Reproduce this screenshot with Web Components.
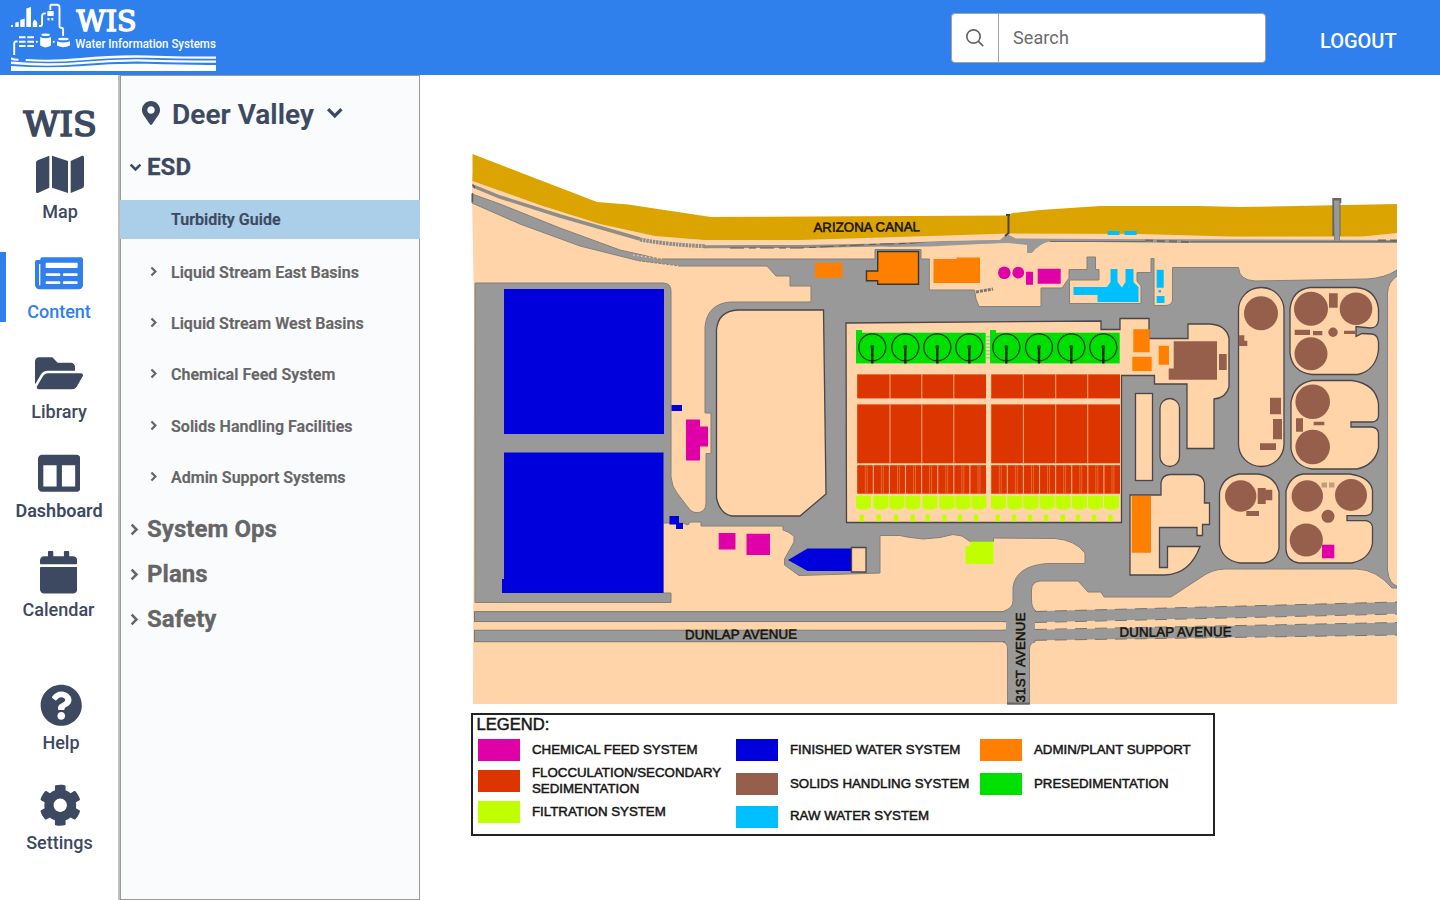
<!DOCTYPE html>
<html lang="en">
<head>
<meta charset="utf-8">
<title>WIS - Water Information Systems</title>
<style>
html,body{margin:0;height:100%;background:#fff;font-family:Roboto,"Liberation Sans",sans-serif;overflow:hidden}
</style>
</head>
<body>
<wis-app></wis-app>
<script>
const define = (name, html, setup) => {
  const tpl = document.createElement('template');
  tpl.innerHTML = html;
  customElements.define(name, class extends HTMLElement {
    connectedCallback() {
      if (this.shadowRoot) return;
      this.attachShadow({mode: 'open'}).append(tpl.content.cloneNode(true));
      if (setup) setup(this, this.shadowRoot);
    }
  });
};

const ICONS = {
  map: [576, 48, '<path d="M0 117.66v346.32c0 11.32 11.43 19.06 21.94 14.86L160 416V32L20.12 87.95A32.006 32.006 0 0 0 0 117.66zM192 416l192 64V96L192 32v384zM554.06 33.16L416 96v384l139.88-55.95A31.996 31.996 0 0 0 576 394.34V48.02c0-11.32-11.43-19.06-21.94-14.86z"/>'],
  news: [576, 48, '<path d="M552 64H88c-13.255 0-24 10.745-24 24v8H24c-13.255 0-24 10.745-24 24v272c0 30.928 25.072 56 56 56h472c26.51 0 48-21.49 48-48V88c0-13.255-10.745-24-24-24zM56 400a8 8 0 0 1-8-8V144h16v248a8 8 0 0 1-8 8zm236-16H140c-6.627 0-12-5.373-12-12v-8c0-6.627 5.373-12 12-12h152c6.627 0 12 5.373 12 12v8c0 6.627-5.373 12-12 12zm208 0H348c-6.627 0-12-5.373-12-12v-8c0-6.627 5.373-12 12-12h152c6.627 0 12 5.373 12 12v8c0 6.627-5.373 12-12 12zm-208-96H140c-6.627 0-12-5.373-12-12v-8c0-6.627 5.373-12 12-12h152c6.627 0 12 5.373 12 12v8c0 6.627-5.373 12-12 12zm208 0H348c-6.627 0-12-5.373-12-12v-8c0-6.627 5.373-12 12-12h152c6.627 0 12 5.373 12 12v8c0 6.627-5.373 12-12 12zm0-96H140c-6.627 0-12-5.373-12-12v-40c0-6.627 5.373-12 12-12h360c6.627 0 12 5.373 12 12v40c0 6.627-5.373 12-12 12z"/>'],
  folder: [576, 48, '<path d="M572.694 292.093L500.27 416.248A63.997 63.997 0 0 1 444.989 448H45.025c-18.523 0-30.064-20.093-20.731-36.093l72.424-124.155A64 64 0 0 1 152 256h399.964c18.523 0 30.064 20.093 20.73 36.093zM152 224h328v-48c0-26.51-21.49-48-48-48H272l-64-64H48C21.49 64 0 85.49 0 112v278.046l69.077-118.418C86.214 242.25 117.989 224 152 224z"/>'],
  columns: [512, 42.5, '<path d="M464 32H48C21.49 32 0 53.49 0 80v352c0 26.51 21.49 48 48 48h416c26.51 0 48-21.49 48-48V80c0-26.51-21.49-48-48-48zM224 416H64V160h160v256zm224 0H288V160h160v256z"/>'],
  calendar: [448, 37.2, '<path d="M12 192h424c6.6 0 12 5.4 12 12v260c0 26.5-21.5 48-48 48H48c-26.5 0-48-21.5-48-48V204c0-6.6 5.4-12 12-12zm436-44v-36c0-26.5-21.5-48-48-48h-48V12c0-6.6-5.4-12-12-12h-40c-6.6 0-12 5.4-12 12v52H160V12c0-6.6-5.4-12-12-12h-40c-6.6 0-12 5.4-12 12v52H48C21.5 64 0 85.5 0 112v36c0 6.6 5.4 12 12 12h424c6.6 0 12-5.4 12-12z"/>'],
  help: [512, 42.5, '<path d="M504 256c0 136.997-111.043 248-248 248S8 392.997 8 256C8 119.083 119.043 8 256 8s248 111.083 248 248zM262.655 90c-54.497 0-89.255 22.957-116.549 63.758-3.536 5.286-2.353 12.415 2.715 16.258l34.699 26.31c5.205 3.947 12.621 3.008 16.665-2.122 17.864-22.658 30.113-35.797 57.303-35.797 20.429 0 45.698 13.148 45.698 32.958 0 14.976-12.363 22.667-32.534 33.976C247.128 238.528 216 254.941 216 296v4c0 6.627 5.373 12 12 12h56c6.627 0 12-5.373 12-12v-1.333c0-28.462 83.186-29.647 83.186-106.667 0-58.002-60.165-102-116.531-102zM256 338c-25.365 0-46 20.635-46 46 0 25.364 20.635 46 46 46s46-20.636 46-46c0-25.365-20.635-46-46-46z"/>'],
  cog: [512, 42.5, '<path d="M487.4 315.7l-42.6-24.6c4.3-23.2 4.3-47 0-70.2l42.6-24.6c4.9-2.8 7.1-8.6 5.5-14-11.1-35.6-30-67.8-54.7-94.6-3.8-4.1-10-5.1-14.8-2.3L380.8 110c-17.9-15.4-38.5-27.3-60.8-35.1V25.8c0-5.6-3.9-10.5-9.4-11.7-36.7-8.2-74.3-7.8-109.2 0-5.5 1.2-9.4 6.1-9.4 11.7V75c-22.2 7.9-42.8 19.8-60.8 35.1L88.7 85.5c-4.9-2.8-11-1.9-14.8 2.3-24.7 26.7-43.6 58.9-54.7 94.6-1.7 5.4.6 11.2 5.5 14L67.3 221c-4.3 23.2-4.3 47 0 70.2l-42.6 24.6c-4.9 2.8-7.1 8.6-5.5 14 11.1 35.6 30 67.8 54.7 94.6 3.8 4.1 10 5.1 14.8 2.3l42.6-24.6c17.9 15.4 38.5 27.3 60.8 35.1v49.2c0 5.6 3.9 10.5 9.4 11.7 36.7 8.2 74.3 7.8 109.2 0 5.5-1.2 9.4-6.1 9.4-11.7v-49.2c22.2-7.9 42.8-19.8 60.8-35.1l42.6 24.6c4.9 2.8 11 1.9 14.8-2.3 24.7-26.7 43.6-58.9 54.7-94.6 1.5-5.5-.7-11.3-5.6-14.1zM256 336c-44.1 0-80-35.9-80-80s35.9-80 80-80 80 35.9 80 80-35.9 80-80 80z"/>'],
  pin: [384, 18, '<path d="M172.268 501.67C26.97 291.031 0 269.413 0 192 0 85.961 85.961 0 192 0s192 85.961 192 192c0 77.413-26.97 99.031-172.268 309.67-9.535 13.774-29.93 13.773-39.464 0zM192 272c44.183 0 80-35.817 80-80s-35.817-80-80-80-80 35.817-80 80 35.817 80 80 80z"/>']
};

define('wis-icon', `<style>:host{display:block;flex:none}svg{display:block;fill:currentColor}</style>`, (el, root) => {
  const [w, px, d] = ICONS[el.getAttribute('name')];
  root.innerHTML += `<svg viewBox="0 0 ${w} 512" width="${px}" height="${px * 512 / w}">${d}</svg>`;
});

define('wis-chevron', `<style>:host{display:block;flex:none}svg{display:block;fill:none;stroke:currentColor;stroke-linecap:square}
</style>`, (el, root) => {
  const s = +el.getAttribute('size'), w = +el.getAttribute('weight'), down = el.hasAttribute('down');
  const long = s, half = s / 2, m = w;
  const W = (down ? long : half) + 2 * m, H = (down ? half : long) + 2 * m;
  const p = down ? `${m},${m} ${m + half},${m + half} ${m + long},${m}` : `${m},${m} ${m + half},${m + half} ${m},${m + long}`;
  root.innerHTML += `<svg width="${W}" height="${H}"><polyline points="${p}" stroke-width="${w}"/></svg>`;
});

define('wis-logo', `<style>:host{display:block;width:240px;height:75px}svg{display:block;fill:#fff}</style>
<svg width="240" height="75" viewBox="0 0 240 75">
<rect x="11" y="25" width="2" height="2"/><path d="M15.3 22.7l3.4-1V27h-3.4zM20.3 20l4.4-1.5V27h-4.4zM26.3 8.5L31 7v20h-4.7zM32.8 22l1.8-2.4 2.6 2.4v5h-4.4z"/>
<rect x="47.3" y="11" width="6.4" height="5" rx=".8"/><rect x="47.5" y="18" width="2" height="2.4"/><rect x="51.3" y="18" width="2" height="2.4"/>
<g fill="none" stroke="#fff" stroke-width="1.9"><path d="M39 26h1.5q1.6 0 1.6-2V16q0-2.6 2.6-2.6h1M50.3 10V6q0-1.2 1.2-1.2h5.3q2.7 0 2.7 3V26q0 1.8 1.6 1.8 2 .1 2 2V36M14.2 55V43.5q0-2 2-2h1.4"/></g>
<path d="M19 36.3h6.5v2H19zM27.3 36.3H34v2h-6.7zM19 40.7h6.5v2H19zM27.3 40.7H34v2h-6.7zM19 45h6.5v2H19zM27.3 45H34v2h-6.7z"/>
<circle cx="36.8" cy="41.8" r="1.1"/><circle cx="53.8" cy="41.8" r="1.1"/>
<path d="M40.2 37q5.4 2.4 10.8 0v8.600q-5.400 3.600-10.800 0z"/><ellipse cx="45.600" cy="34.800" rx="4.300" ry="1.200"/>
<path d="M57 41.300q6.400 2.600 13 0v4.200q-6.600 3.400-13 0z"/><ellipse cx="63.400" cy="39" rx="5.400" ry="1.300"/>
<path d="M11 57.200q4 1.800 7.500 1.500v2Q14 61 11 59.400zM25.700 59q25 1.800 55-1 35-3.400 66-2.600 38 1.200 69.300 1.200v2.200q-35 .2-70-1-32-.8-64 2.400-30 2.700-56.300.8zM11 61.600q36 3.300 72 .2 33-3 64-2.400 38 1.300 69 1.100v2.200q-36 .1-70-1-31-.6-63 2.400-36 3.200-72-.1zM11 66q36 2.700 72 0 33-2.900 64-2.200 38 1.300 69 1.100V71H11z"/>
<text x="76.500" y="30.700" font-family="DejaVu Serif,serif" font-size="28.300" stroke="#fff" stroke-width="1.500" textLength="60" lengthAdjust="spacingAndGlyphs">WIS</text>
<text x="75.300" y="48" font-family="Roboto,sans-serif" font-weight="500" font-size="12" textLength="140.500" lengthAdjust="spacingAndGlyphs">Water Information Systems</text>
</svg>`);

define('wis-search', `<style>
:host{display:flex;box-sizing:border-box;width:315px;height:50px;background:#fff;border:1px solid #a3a3a3;border-radius:4px;color:#6b6b6b;font-size:18px;letter-spacing:.1px}
.i{width:46px;border-right:1px solid #a3a3a3;display:flex;align-items:center;justify-content:center}
.t{display:flex;align-items:center;padding-left:14px;padding-bottom:1px}
svg{display:block}
</style><div class="i"><svg width="20" height="20" fill="none" stroke="#666" stroke-width="1.700"><circle cx="8.500" cy="8.500" r="6.700"/><path d="M13.200 13.200l5 5"/></svg></div><div class="t"><slot></slot></div>`);

define('wis-header', `<style>
:host{display:flex;height:75px;background:#2f80ed;justify-content:space-between;align-items:stretch}
.r{display:flex;padding-right:44px;padding-top:13px}
.out{color:#fff;font-size:20px;font-weight:500;line-height:24px;margin-top:16px;margin-left:54px;width:76px;white-space:nowrap}
</style><wis-logo></wis-logo><div class="r"><wis-search>Search</wis-search><div class="out"><slot></slot></div></div>`);

define('rail-item', `<style>
:host{display:flex;position:relative;flex-direction:column;align-items:center;height:70px;color:#3c4961;font-size:18px;font-weight:500;--x:0px;--lx:0px;--ly:6px}
:host([active]){color:#2f80ed;box-shadow:inset 6px 0 #2f80ed}
:host([strong]){font-weight:600}
.i{height:43px;padding-left:var(--x)}
.l{line-height:22px;margin-top:var(--ly);padding-left:var(--lx);white-space:nowrap}
</style><div class="i"></div><div class="l"><slot></slot></div>`, (el, root) => {
  root.querySelector('.i').innerHTML = `<wis-icon name="${el.getAttribute('icon')}"></wis-icon>`;
});

define('wis-rail', `<style>
:host{display:flex;flex-direction:column;box-sizing:border-box;width:120px;border-right:2px solid #bdbdbd;background:#fff}
svg{display:block;height:78px;flex:none}
nav{display:grid;grid-template-rows:99px 100px 100px 99px 70px}
.low{grid-template-rows:100px 70px;margin-top:63px}
</style>
<svg width="118" height="78"><text x="23.500" y="61" font-family="DejaVu Serif,serif" font-size="33.500" fill="#3c4961" stroke="#3c4961" stroke-width="1.700" textLength="73.300" lengthAdjust="spacingAndGlyphs">WIS</text></svg>
<nav>
<rail-item icon="map" style="--x:2px;--lx:2px;--ly:5px">Map</rail-item>
<rail-item icon="news" active>Content</rail-item>
<rail-item icon="folder">Library</rail-item>
<rail-item icon="columns" strong style="--ly:5px">Dashboard</rail-item>
<rail-item icon="calendar" style="margin-right:1px;--lx:-1px;--ly:5px">Calendar</rail-item>
</nav>
<nav class="low">
<rail-item icon="help" style="--x:4px;--lx:4px;--ly:5px">Help</rail-item>
<rail-item icon="cog" style="--x:2px;--lx:1px;--ly:5px">Settings</rail-item>
</nav>`);

define('tree-group', `<style>
:host{display:flex;align-items:center;height:45.200px;color:#666;font-size:24px;font-weight:700;letter-spacing:.06px;-webkit-text-stroke:.3px currentColor;white-space:nowrap}
:host([open]){height:26px;color:#3c4961;margin-bottom:20px}
.c{width:17px;padding-left:9px;padding-top:1px}
</style><div class="c"></div><slot></slot>`, (el, root) => {
  root.querySelector('.c').innerHTML = el.hasAttribute('open')
    ? '<wis-chevron down size="8" weight="2.500" style="margin-left:-.8px"></wis-chevron>'
    : '<wis-chevron size="8" weight="2.500"></wis-chevron>';
});

define('tree-leaf', `<style>
:host{display:flex;align-items:center;height:51.300px;color:#666;font-size:16px;font-weight:600;letter-spacing:.03px;-webkit-text-stroke:.2px currentColor;white-space:nowrap}
:host([selected]){height:39.300px;background:#abcfe8;color:#3c4961;margin:0 -1px 7.400px;padding-left:1px}
.c{width:21px;padding-left:29px;padding-bottom:2px}
</style><div class="c"></div><slot></slot>`, (el, root) => {
  if (!el.hasAttribute('selected')) root.querySelector('.c').innerHTML = '<wis-chevron size="6.500" weight="2.200" style="margin-left:-.5px"></wis-chevron>';
});

define('wis-side', `<style>
:host{display:flex;flex-direction:column;box-sizing:border-box;width:300px;background:#fafbfd;border:1px solid #999}
.site{display:flex;align-items:center;height:77px;padding-bottom:1px;color:#3c4961;font-size:28px;font-weight:600;padding-left:21px;white-space:nowrap}
.site wis-icon{margin-top:-3px;margin-right:12px}
.site span{-webkit-text-stroke:.2px currentColor;letter-spacing:.05px}
.site wis-chevron{margin-left:12px;margin-top:-3px}
.ops{margin-top:2.800px}
</style>
<div class="site"><wis-icon name="pin"></wis-icon><span>Deer Valley</span><wis-chevron down size="11" weight="3.300"></wis-chevron></div>
<tree-group open>ESD</tree-group>
<tree-leaf selected>Turbidity Guide</tree-leaf>
<tree-leaf>Liquid Stream East Basins</tree-leaf>
<tree-leaf>Liquid Stream West Basins</tree-leaf>
<tree-leaf>Chemical Feed System</tree-leaf>
<tree-leaf>Solids Handling Facilities</tree-leaf>
<tree-leaf>Admin Support Systems</tree-leaf>
<tree-group class="ops">System Ops</tree-group>
<tree-group>Plans</tree-group>
<tree-group>Safety</tree-group>`);

define('plant-map', `<style>
:host{display:block}
svg{display:block}
.road{fill:#999;stroke:#858079;stroke-width:1}
.isle{fill:#ffd4a9;stroke:#4a4548;stroke-width:1.300}
.peach{fill:#ffd4a9}
.mag{fill:#df00a8}.blu{fill:#0000dc}.org{fill:#ff8000}.brn{fill:#965f4b}.cyn{fill:#00bfff}.grn{fill:#00e000}.red{fill:#dc3500}.lim{fill:#bfff00}
text{font:13.270px "Liberation Sans",Arial,sans-serif;fill:#161208;stroke:#161208;stroke-width:.5}
</style>
<svg width="937" height="560" viewBox="460 150 937 560">
<path class="peach" d="M472 175L640 225 1397 215V704H473L474 300 472 200z"/>
<path fill="#dba400" d="M472.500 154L597 202 628 204.500 711 217 1006 215.500 1013 213 1040 210 1100 206H1200L1240 207 1397 204V233L1362 236.500H1230L1140 234 1008 233.500 930 236 800 240H705L655 236 600 224 540 205 472.500 181z"/>
<path fill="none" stroke="#8f8d88" stroke-width="3.500" d="M473 186L500 197 560 216 640 239"/>
<path fill="none" stroke="#8f8d88" stroke-width="4" stroke-dasharray="2.500 .8" d="M640 239.500Q670 245 705 246.200"/>
<path fill="none" stroke="#8f8d88" stroke-width="3" d="M704 246.700L805 246.500 880 245 945 242.500 1010 241.500"/>
<path fill="none" stroke="#5f5d5a" stroke-width="1" stroke-dasharray="14 5 7 4" d="M730 248H800L880 244 930 243 1010 241"/>
<path fill="#999" d="M1007 234L1016 238.500 1100 239 1397 240V243H1180L1050 241.500Q1040 243 1032 253H1027V245L1008 243H1000L930 246.500 880 247 930 242 1000 240z"/>
<path fill="none" stroke="#6e6a66" stroke-width="1" d="M1050 241.500H1145M1190 241.700H1397"/>
<path fill="none" stroke="#6e6a66" stroke-width="2" stroke-dasharray="8 4" d="M1145 240.500L1190 242M1378 240.500H1397"/>
<path class="road" d="M472 194L500 204 560 228 620 250 660 259H875V249.500H921V259H929.300V290H974.500L976 299 979 306.500H1041V288H1062L1069 278V269.500H1087V257H1095.500V269.500H1099V280H1069.500V303.500H1141V286L1137 281V272.500H1151V258.500H1154V305.500H1166Q1172 305 1172.500 300V267.500H1238.500Q1239 280 1255 281L1367 279Q1385 278 1397 270V276Q1388 282 1387.500 293V570Q1389 584 1397 586V588H1392Q1377 570 1357 569H1225Q1212 569 1200 578L1171 597H1104L1101 592H1088L1078 581H1040Q1031.500 582 1031.500 590V600Q1031.500 608 1036 611L1035 642Q1029.500 643 1029.500 649V704H1007.500V649Q1007.500 643 1003 642L1004 611Q1013 608 1013 601V587Q1016 566 1047 563.500H1085V553Q1075 540 1055 538.500L993.500 538V541.500H970L962 536 953 534.500 940 537.500 923 539 907 537 900 535.500H880V573L799 575.500 784.500 565V559L794 542V536L788 532 783 530V526H701V522H690L688 525 683 523H663V593H671V602.500H475V283H663Q671 283 671 291V477Q672 487 677 493L690 510Q697 515.500 704 510 706 507 706 503V453.500H711V413H705V327Q707 304 730 302H811V286H790V276H776L767 266H680L640 261 580 246 520 224 472 203z"/>
<path fill="none" stroke="#5c5856" stroke-width="1.500" d="M472.500 193V202M472.500 184.500L475 188"/>
<path fill="none" stroke="#ffd4a9" stroke-width="1.200" stroke-dasharray="1.500 2.500" d="M633 255L662 259M633 261L678 266"/>
<path class="isle" d="M716.500 330Q718 311 738 310H823.500L826 494 800 516H732Q720 514 716.500 498z"/>
<path class="isle" d="M846 323L1101 321V329.500H1120V318.500H1149V338.500H1188V324H1210Q1226 325 1229 338V387Q1226 398 1214 399V448.500H1187V384H1154.500V375.500H1121.500V522.500H846.500z"/>
<rect class="isle" x="1135.500" y="393.500" width="17" height="87"/>
<rect class="isle" x="1160" y="398.500" width="19.500" height="68" rx="9.700"/>
<rect class="isle" x="1238.500" y="287.500" width="45.500" height="179" rx="22.500"/>
<path class="isle" d="M1310 287.500H1356Q1376 289 1378.500 309V320Q1378 328 1370 328L1356 326.500V336.500L1362 333.500 1372 334Q1378 335 1378.500 342V350Q1376 370 1358 374.500H1312Q1292 372 1290 353V309Q1292 290 1310 287.500z"/>
<path class="isle" d="M1312 380.500H1352Q1376 384 1378.500 404V416Q1378 421.500 1372 422H1351V427H1372Q1378 428 1378.500 433V448Q1375 465 1357 469H1312Q1294 466 1291 449V402Q1294 384 1312 380.500z"/>
<path class="isle" d="M1239 474H1258Q1275 476 1279 492V548Q1277 561 1264 563H1240Q1222 560 1219.500 544V493Q1222 477 1239 474z"/>
<path class="isle" d="M1303 474H1350Q1370 477 1372.500 490V510Q1372 515 1366 515.700H1347V520.700H1366Q1372 522 1372.500 527V543Q1370 559 1352 563H1299Q1287 561 1286 550V491Q1290 476 1303 474z"/>
<path class="isle" d="M1130 495H1161V483Q1162 475 1170 474.500H1195Q1203 475 1204.500 483V503H1209.500V524.500H1202.500V535.500H1197V527.500H1159.500V567.500H1167.500V546.500H1200Q1190 574 1165 575H1130z"/>
<path fill="#999" d="M474 611.700H1012V621.700H474zM474 630H1012V641.700H474zM1025 611.500L1397 602V613.700L1025 622.500zM1025 630L1397 622.500V635L1025 640.500z"/>
<path fill="none" stroke="#77736f" d="M474 611.700H1004M474 621.700H1006M474 630H1006M474 641.700H1005M474.500 612V621.500M474.500 630V641.500"/>
<path class="peach" d="M474 622.200H1006V629.500H474zM1035 622.700L1397 614.200V622L1035 629.500z"/>
<path fill="none" stroke="#77736f" stroke-dasharray="12 8" d="M1035 611.500L1397 602M1035 622.500L1397 614M1035 629.500L1397 622.500M1035 640.300L1397 635"/>
<path fill="#666" d="M1007 702.500H1030V704.500H1007zM1332.300 198H1341.300V203H1340.500V236H1340V241H1334V236H1332.300z"/>
<path fill="#999" d="M1334 200.500H1339.500V241H1334.500z"/>
<path fill="none" stroke="#4c4636" stroke-width="2" d="M1006 215H1010M1008.500 215V233L1005 236"/>
<path class="blu" d="M504 289H664V434H504zM504 452.500H663.500V593H502V579H504zM671.500 405H682V411H671.500zM669.500 516H679V523H683V529H676V524.500H669.500zM788 560L807.500 548.500H851V571H807.500z"/>
<path class="isle" d="M851.500 547.500H866V572H851.500z"/>
<path class="mag" d="M686 419.500H700V426.500H708V446.500H700V460.500H686zM718.700 533H735.500V549.500H718.700zM746.500 533.700H770V555H746.500zM1026 271.700H1033V284.700H1026zM1037.700 268.700H1060.700V283.700H1037.700z"/>
<circle class="mag" cx="1004.300" cy="272.700" r="6.300"/><circle class="mag" cx="1018.300" cy="272.700" r="5.900"/>
<path class="lim" d="M970 541.500H993.500V564H965.500V546H970z"/>
<path class="org" d="M815 262.700H842.500V277.700H815zM933.500 259H956.500V257.500H980V283H933.500z"/>
<path class="org" stroke="#3a3530" stroke-width="1.400" d="M877.700 251.500H918.500V284.300H877.700V280.700H866.500V271H877.700z"/>
<path fill="none" stroke="#777" stroke-width="3" stroke-dasharray="3 1" d="M976 292L993 289"/>
<path class="cyn" d="M1073.500 287H1107L1110.500 282V269H1117.500V282L1122 287.500 1125.500 282V269H1133.500V282L1138.500 287V302H1097.500V295H1073.500zM1156.700 269.700H1163.700V287.700H1156.700zM1158.500 290H1161V292.500H1158.500zM1156.700 296H1164.500V303H1156.700zM1107.700 231H1119.500V235H1107.700zM1124.500 231H1136.700V235H1124.500z"/>
<path class="org" d="M1133.300 329.300H1149.700V352.300H1133.300zM1132.300 356.700H1151.700V371H1132.300zM1158.700 345.700H1169V364.700H1158.700zM1131.700 496H1151V552.700H1131.700z"/>
<path class="brn" d="M1173.700 341.300H1217V379.700H1168.700V368.500H1173.700zM1219 354H1226.700V370H1219zM1238.700 335.300H1244.300V340.700H1247.300V346H1238.700zM1270 397.700H1281V414.300H1270zM1273 419H1282V439.300H1273zM1260 443.300H1276V450H1260zM1329 293.300H1337.700V307.700H1329zM1294.700 329.700H1310V335H1294.700zM1313 331H1322.300V335.300H1313zM1344 330.700H1355.300V334H1344zM1296 418.300H1303V431.700H1296zM1313.700 421.700H1324.300V425.300H1313.700zM1257.700 488H1265.700V489.700H1272.300V500.300H1265.700V504H1257.700zM1246.300 511H1259V516H1246.300z"/>
<g class="brn"><circle cx="1261" cy="313.300" r="17"/><circle cx="1311" cy="308.700" r="17"/><circle cx="1356" cy="308.700" r="16.300"/><circle cx="1311" cy="353.700" r="16.500"/><circle cx="1333" cy="332.300" r="4.700"/><circle cx="1312.700" cy="401.700" r="17.300"/><circle cx="1312.700" cy="447" r="17.300"/><circle cx="1240.700" cy="496" r="15.700"/><circle cx="1307.300" cy="496" r="15.700"/><circle cx="1351" cy="495" r="16"/><circle cx="1328" cy="516.300" r="6.500"/><circle cx="1306.300" cy="540" r="16.600"/></g>
<path fill="#c79a7a" d="M1321.500 482.500H1327V487.500H1321.500zM1329 482.500H1334.500V487.500H1329z"/>
<path class="mag" d="M1322 544.700H1334.300V558.300H1322z"/>
<g id="process"></g>
<text x="813.500" y="232" textLength="106.500" transform="rotate(-.4 813 232)">ARIZONA CANAL</text>
<text x="685" y="639.300" textLength="112" transform="rotate(-.3 685 639)">DUNLAP AVENUE</text>
<text x="1119.500" y="636.800" textLength="112" transform="rotate(-.3 1119 637)">DUNLAP AVENUE</text>
<text transform="translate(1024.700 702.500) rotate(-90)" textLength="90">31ST AVENUE</text>
</svg>`, (el, root) => {
  const r = (c, x1, y1, x2, y2, o = '') => `<rect class="${c}" x="${x1}" y="${y1}" width="${+(x2 - x1).toFixed(2)}" height="${+(y2 - y1).toFixed(2)}" ${o}/>`;
  const line = (x, y1, y2, w, c = '#f0a070') => `<path stroke="${c}" stroke-width="${w}" d="M${x} ${y1}V${y2}"/>`;
  let s = '';
  const halves = [
    {x: 856, wells: [872.3, 905.3, 937.3, 969.3], div: [890, 921.8, 953.8], cells: [588, 640, 688, 736, 787, 838, 886, 934], dots: [605, 656, 708, 758, 803, 853, 900, 948]},
    {x: 990, wells: [1006.3, 1039, 1071.3, 1103.3], div: [1023.4, 1055.7, 1087.7], cells: [993, 1042, 1090, 1139, 1187, 1236, 1284, 1332], dots: [1013, 1062, 1110, 1158, 1208, 1254, 1302, 1351]}
  ];
  for (const h of halves) {
    const a = h.x + 1.2, b = h.x + 130;
    s += r('grn', h.x, 332.7, h.x + 129.7, 363.4) + r('grn', h.x, 330, h.x + 6, 334);
    for (const x of h.wells) s += `<circle cx="${x}" cy="347.300" r="13.500" fill="none" stroke="#083c08" stroke-width="1.300"/><circle cx="${x}" cy="347" r="2" fill="#0b5a0b"/><path stroke="#0a2c0a" stroke-width="2.400" d="M${x} 348V363.500"/>`;
    s += r('red', a, 374.4, b, 398.4) + r('red', a, 404.4, b, 463.3) + r('red', a, 465.2, b, 493.7);
    for (const x of h.div) s += line(x, 374, 399, 1.1) + line(x, 404, 464, 1.1);
    for (let i = 1; i < 16; i++) s += line((a + i * (b - a) / 16).toFixed(1), 465, 494, i % 2 ? .8 : 1.1, i % 2 ? '#e8743c' : '#f3ab7c');
    for (let i = 0; i < 8; i++) s += line((a + 10 + i * (b - a) / 8).toFixed(1), 465, 494, .7, '#ea7c46');
    for (const z of h.cells) { const x = 660 + z / 3; s += r('lim', x, 495.7, x + 15, 508, 'rx="1"') + r('lim', x + 2, 506, x + 12, 509.5); }
    for (const z of h.dots) { const x = 660 + z / 3; s += r('lim', x - 2.2, 514.5, x + 2.2, 521.5); }
  }
  s += '<path fill="none" stroke="#7be07a" stroke-width="3.500" stroke-dasharray="1.500 2" d="M988 336V360"/>';
  root.getElementById('process').innerHTML = s;
});

define('legend-entry', `<style>
:host{display:flex;align-items:center;height:22px}
i{flex:none;width:42.300px;height:22px;background:var(--c);margin-right:11.700px}
span{line-height:16px;white-space:pre;margin-top:-1px}
</style><i></i><span><slot></slot></span>`);

define('plant-legend', `<style>
:host{display:block;box-sizing:border-box;width:743.500px;height:123px;border:2px solid #222;padding:1px 4px;font:13.290px "Liberation Sans",Arial,sans-serif;color:#161616;-webkit-text-stroke:.5px #161616}
h2{font-size:16.600px;font-weight:400;line-height:18px;margin:0 0 5px -.5px}
.cols{display:grid;grid-template-columns:258px 244px 1fr;padding-left:1px}
.c{display:grid;align-content:start;row-gap:12px}
.c:first-child{row-gap:9px}
.last{margin-top:-1.500px}
</style>
<h2>LEGEND:</h2>
<div class="cols">
<div class="c"><legend-entry style="--c:#df00a8">CHEMICAL FEED SYSTEM</legend-entry><legend-entry style="--c:#dc3500">FLOCCULATION/SECONDARY
SEDIMENTATION</legend-entry><legend-entry style="--c:#bfff00">FILTRATION SYSTEM</legend-entry></div>
<div class="c"><legend-entry style="--c:#0000dc">FINISHED WATER SYSTEM</legend-entry><legend-entry style="--c:#965f4b">SOLIDS HANDLING SYSTEM</legend-entry><legend-entry class="last" style="--c:#00bfff">RAW WATER SYSTEM</legend-entry></div>
<div class="c"><legend-entry style="--c:#ff8000">ADMIN/PLANT SUPPORT</legend-entry><legend-entry style="--c:#00e000">PRESEDIMENTATION</legend-entry></div>
</div>`);

define('wis-app', `<style>
:host{display:flex;flex-direction:column;width:1440px;height:900px}
.b{display:flex;flex:1;min-height:0}
main{flex:1;padding:75px 0 0 40px}
plant-legend{margin:3px 0 0 11px}
</style>
<wis-header>LOGOUT</wis-header>
<div class="b"><wis-rail></wis-rail><wis-side></wis-side><main><plant-map></plant-map><plant-legend></plant-legend></main></div>`);
</script>
</body>
</html>
